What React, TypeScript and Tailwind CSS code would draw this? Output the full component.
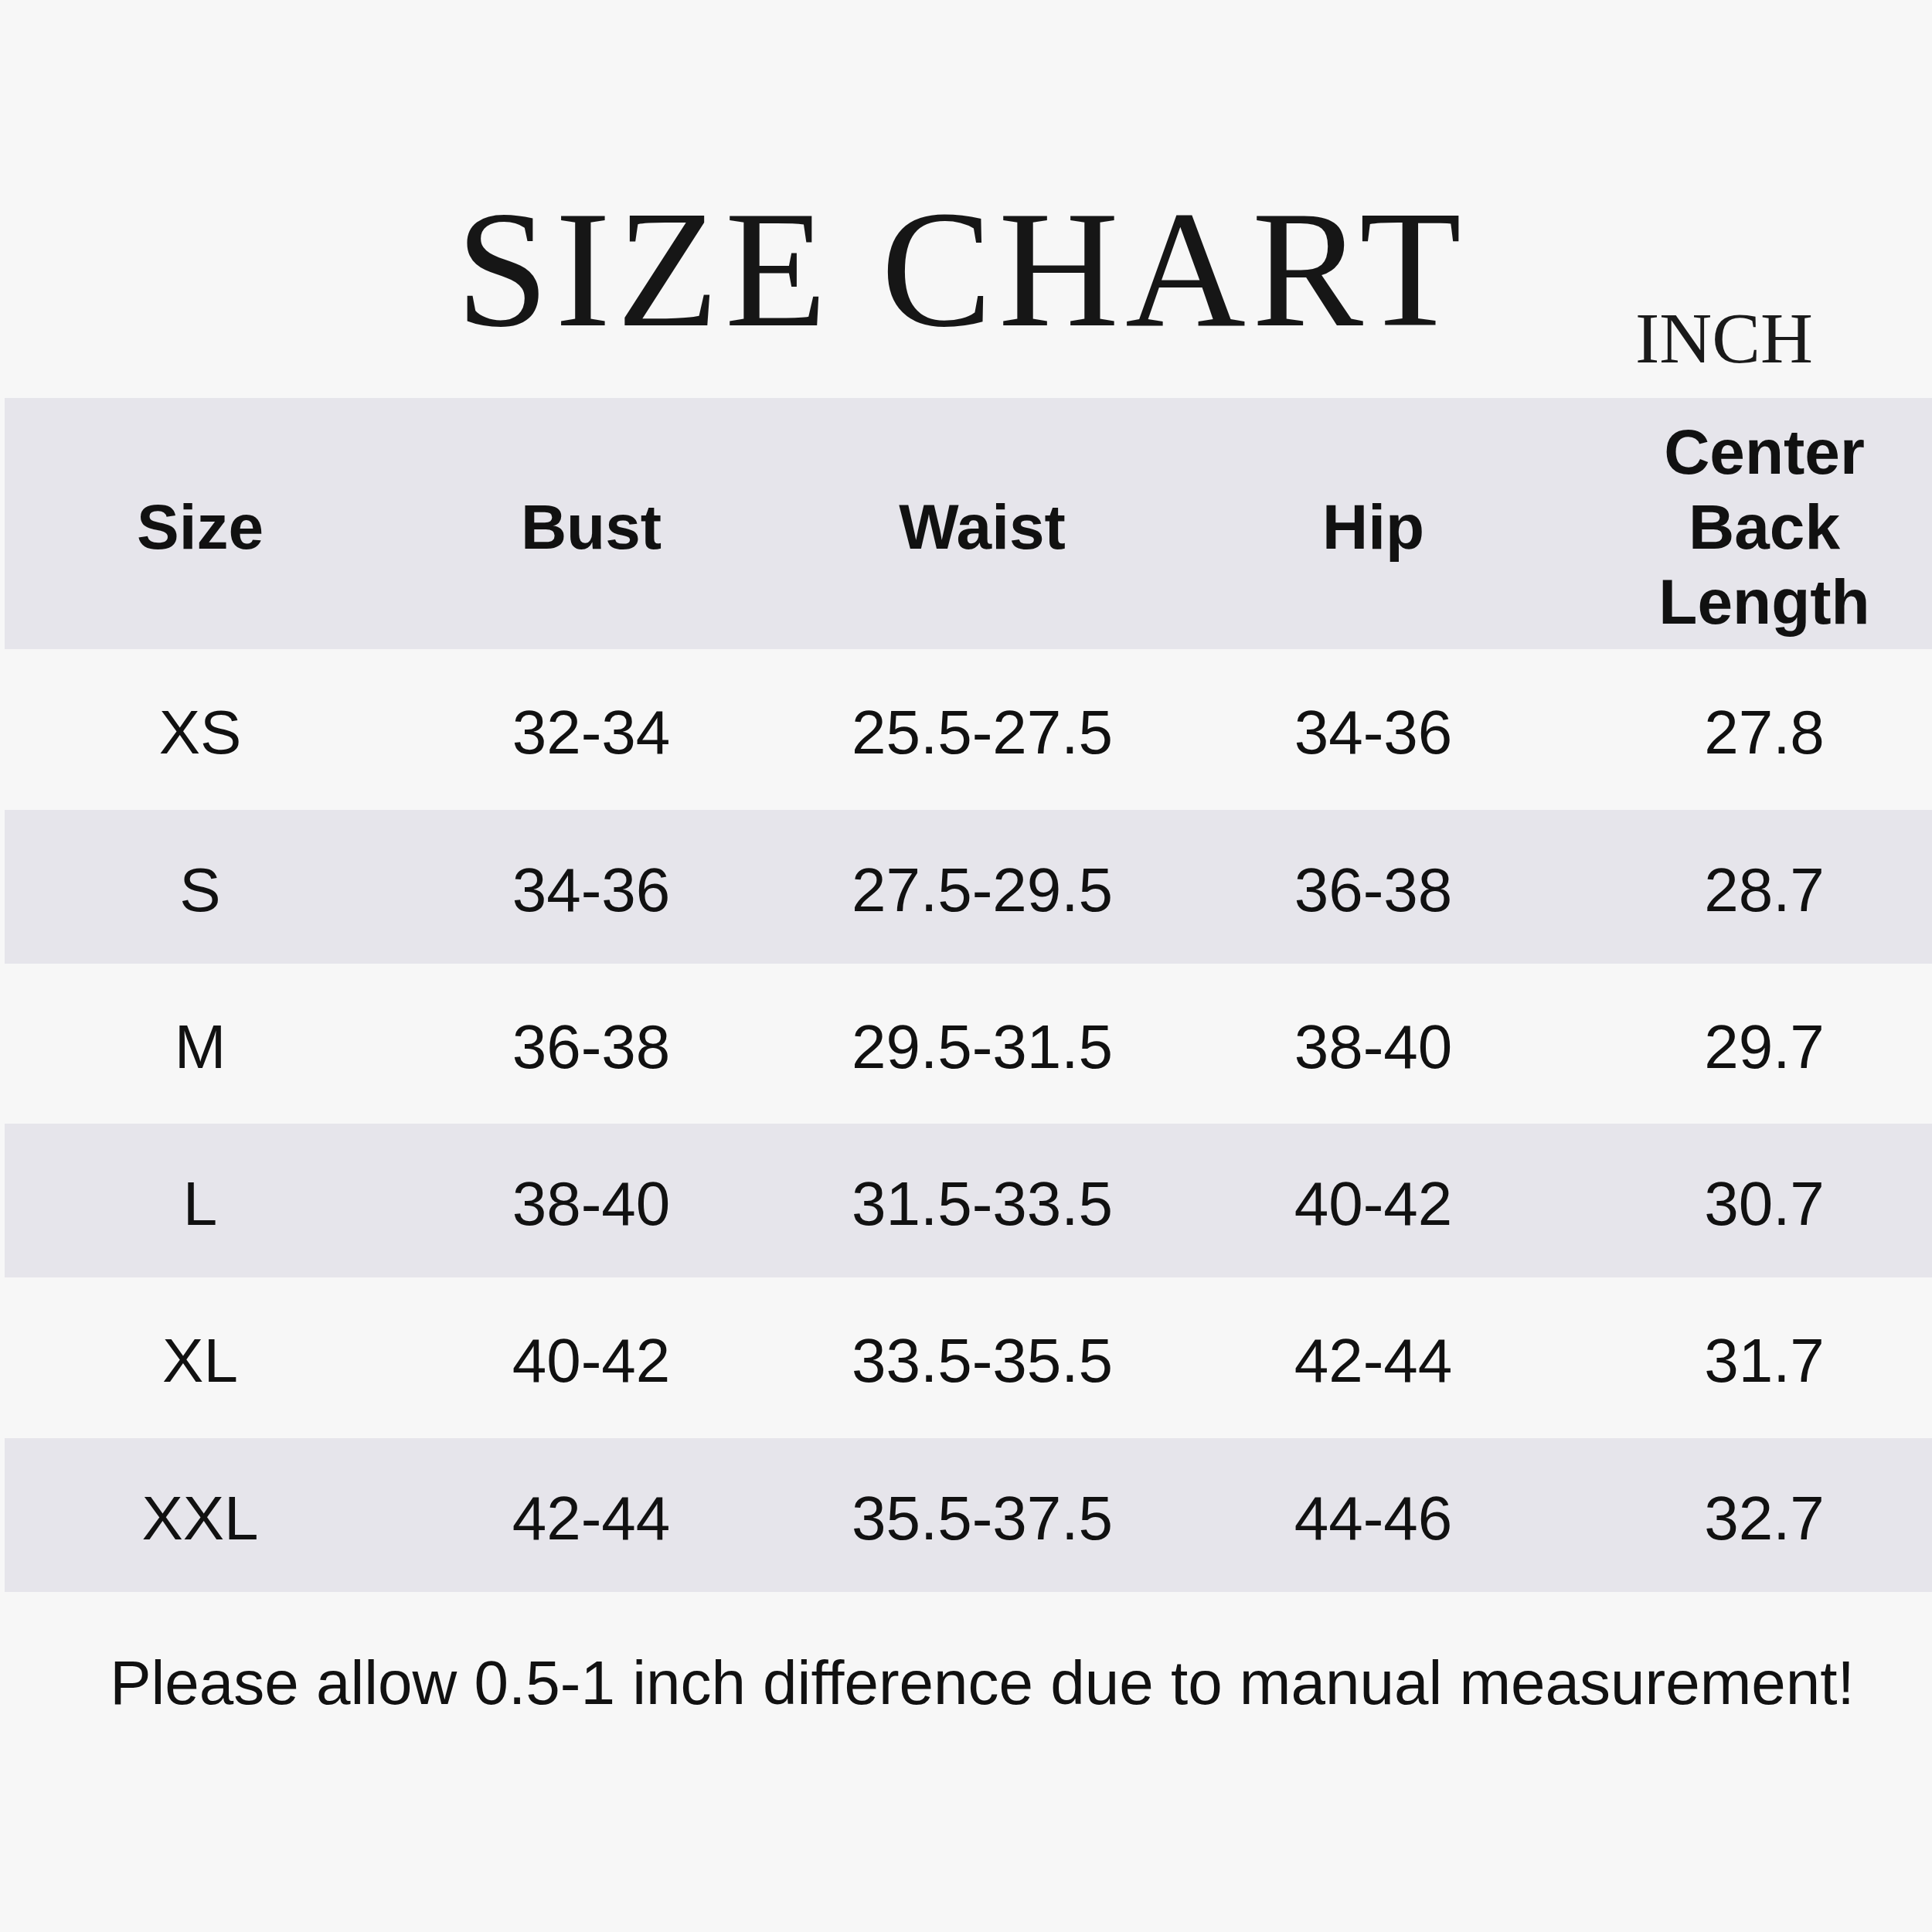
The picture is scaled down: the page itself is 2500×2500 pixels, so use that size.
const headers = ["Size", "Bust", "Waist", "Hip"];

const rows = [
  { size: "XS", bust: "32-34", waist: "25.5-27.5", hip: "34-36", length: "27.8" },
  { size: "S", bust: "34-36", waist: "27.5-29.5", hip: "36-38", length: "28.7" },
  { size: "M", bust: "36-38", waist: "29.5-31.5", hip: "38-40", length: "29.7" },
  { size: "L", bust: "38-40", waist: "31.5-33.5", hip: "40-42", length: "30.7" },
  { size: "XL", bust: "40-42", waist: "33.5-35.5", hip: "42-44", length: "31.7" },
  { size: "XXL", bust: "42-44", waist: "35.5-37.5", hip: "44-46", length: "32.7" },
];

// row heights alternate slightly in the original chart
const rowClass = [
  "h-[208px] bg-transparent",
  "h-[199px] bg-[#e6e5eb]",
  "h-[207px] bg-transparent",
  "h-[199px] bg-[#e6e5eb]",
  "h-[208px] bg-transparent",
  "h-[199px] bg-[#e6e5eb]",
];

export default function App() {
  return (
    <div className="w-[2500px] h-[2500px] overflow-hidden bg-[#f7f7f7] text-[#111111] font-['Liberation_Sans',Arial,sans-serif]">
      <div className="flex h-[484px] pt-[241px] pl-[590px]">
        <h1 className="text-[216px] leading-none tracking-[8px] font-normal font-['Liberation_Serif','Times_New_Roman',serif] text-[#161616]">
          SIZE CHART
        </h1>
        <span className="ml-[217px] mt-[149px] text-[94px] leading-none font-['Liberation_Serif','Times_New_Roman',serif] text-[#1a1a1a]">
          INCH
        </span>
      </div>

      <div className="mt-[31px] ml-[6px] w-[2530px]">
        <div className="grid grid-cols-5 h-[325px] pt-[8px] bg-[#e6e5eb] items-center text-center font-bold text-[82px] leading-[97px]">
          {headers.map((h) => (
            <div key={h}>{h}</div>
          ))}
          <div>
            Center
            <br />
            Back
            <br />
            Length
          </div>
        </div>

        {rows.map((r, i) => (
          <div
            key={r.size}
            className={`grid grid-cols-5 pt-[8px] items-center text-center text-[80px] leading-none ${rowClass[i]}`}
          >
            <div>{r.size}</div>
            <div>{r.bust}</div>
            <div>{r.waist}</div>
            <div>{r.hip}</div>
            <div>{r.length}</div>
          </div>
        ))}

        <p className="mt-[78px] text-center text-[80px] leading-none">
          Please allow 0.5-1 inch difference due to manual measurement!
        </p>
      </div>
    </div>
  );
}
